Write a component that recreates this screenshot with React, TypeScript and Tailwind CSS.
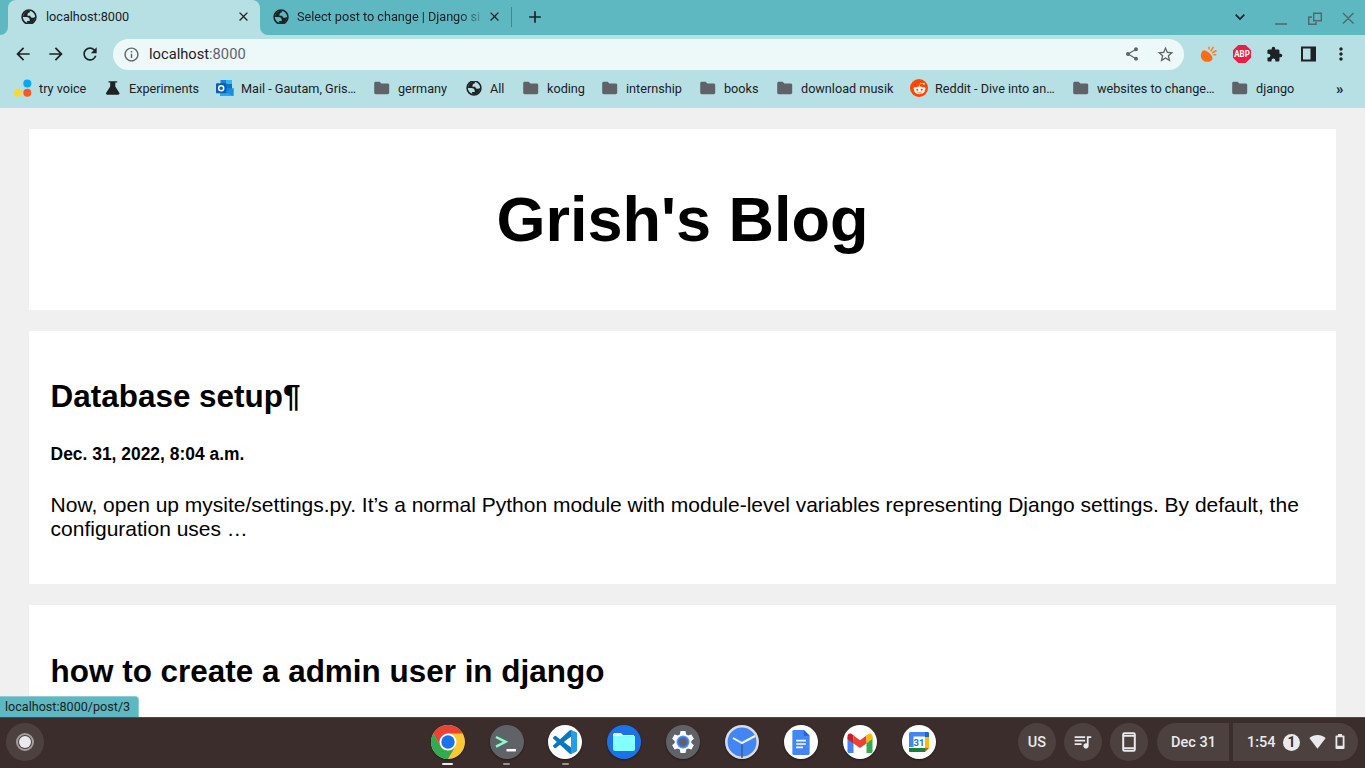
import React from "react";
import {
  MdShare, MdStarBorder, MdExtension, MdRefresh, MdArrowBack, MdArrowForward, MdInfoOutline,
  MdMoreVert, MdClose, MdAdd, MdQueueMusic,
} from "react-icons/md";
import { FaRedditAlien } from "react-icons/fa";

const Globe = () => (
  <svg viewBox="2 2 20 20" className="size-4 shrink-0 p-[.3px]" fill="#202124">
    <path fillRule="evenodd" d="M12 2a10 10 0 1 0 0 20 10 10 0 0 0 0-20zm0 2a8 8 0 1 1 0 16 8 8 0 0 1 0-16z" />
    <path d="M4 12h4.400c3.407.022 4.922 1.730 4.543 5.127H9.488v2.470a8.004 8.004 0 0 0 10.498-8.083C19.327 12.504 18.332 13 17 13c-2.137 0-3.206-.916-3.206-2.750h-3.748c-.274-2.728.683-4.092 2.870-4.092 0-.975.327-1.597.811-1.970A8.004 8.004 0 0 0 4 12z" />
  </svg>
);

const Folder = () => (
  <svg viewBox="0 0 16 16" className="size-4 shrink-0" fill="#5f6368">
    <path d="M1.700 1.800h4l1.600 1.600h6.400c.8 0 1.500.6 1.500 1.400v8c0 .8-.7 1.400-1.500 1.400H1.700c-.8 0-1.500-.6-1.500-1.400V3.200c0-.8.7-1.400 1.500-1.400z" />
  </svg>
);

const Voice = () => (
  <svg viewBox="0 0 18 18" className="-mx-px h-[18px] w-[18px] shrink-0">
    <circle cx="13.300" cy="4.400" r="4" fill="#03a9f4" />
    <circle cx="3.900" cy="13.700" r="3.900" fill="#fdd835" />
    <circle cx="13.300" cy="13.700" r="4" fill="#ff5722" />
  </svg>
);

const Flask = () => (
  <svg viewBox="0 0 16 16" className="size-4 shrink-0" fill="#202124">
    <path d="M3.500 1.200h8.700v1.300h-1.900v4l4 6.300c.6 1-.1 1.900-1.100 1.900H2.300c-1 0-1.700-.9-1.100-1.900l4-6.300v-4H3.500z" />
  </svg>
);

const Outlook = () => (
  <svg viewBox="0 0 18 18" className="-mx-px h-[18px] w-[18px] shrink-0">
    <path d="M4.500 1h11.500v11H4.500z" fill="#1683d8" />
    <path d="M10 1h6v4h-6z" fill="#35b8f1" />
    <path d="M10 5h6v4h-6z" fill="#1472bd" />
    <path d="M4 9.500 10.700 13 17.500 9v8H4z" fill="#28a8ea" />
    <path d="m9 13 8.500 4V9z" fill="#1490df" />
    <rect x="0" y="4.300" width="10.500" height="10" rx=".8" fill="#0a5eb5" />
    <circle cx="5.200" cy="9.300" r="2.500" fill="none" stroke="white" strokeWidth="1.500" />
  </svg>
);

const Reddit = () => (
  <span className="-mx-px flex h-[18px] w-[18px] shrink-0 items-center justify-center rounded-full bg-[#ff4500]">
    <FaRedditAlien className="size-[13px] text-white" />
  </span>
);

const bookmarks = [
  { label: "try voice", icon: <Voice />, w: "w-[90px]" },
  { label: "Experiments", icon: <Flask />, w: "w-[112px]" },
  { label: "Mail - Gautam, Gris…", icon: <Outlook />, w: "w-[157px]" },
  { label: "germany", icon: <Folder />, w: "w-[92px]" },
  { label: "All", icon: <Globe />, w: "w-[57px]" },
  { label: "koding", icon: <Folder />, w: "w-[79px]" },
  { label: "internship", icon: <Folder />, w: "w-[98px]" },
  { label: "books", icon: <Folder />, w: "w-[77px]" },
  { label: "download musik", icon: <Folder />, w: "w-[134px]" },
  { label: "Reddit - Dive into an…", icon: <Reddit />, w: "w-[162px]" },
  { label: "websites to change…", icon: <Folder />, w: "w-[159px]" },
  { label: "django", icon: <Folder />, w: "w-[104px]" },
];

function TabStrip() {
  return (
    <div className="flex h-[35px] bg-[#5db8c1] text-[12.700px] tracking-[-.02px]">
      <div className="w-2 bg-[#b7e0e4]"><div className="h-full rounded-br-lg bg-[#5db8c1]" /></div>
      <div className="flex w-[252px] items-center rounded-t-lg bg-[#b7e0e4] pr-[9px] pl-[13px] pb-[2px]">
        <Globe />
        <span className="ml-[9px] flex-1">localhost:8000</span>
        <MdClose className="size-[15px]" />
      </div>
      <div className="flex flex-1 bg-[#b7e0e4]">
        <div className="flex flex-1 items-center rounded-bl-lg bg-[#5db8c1] pb-[2px] pl-[13px]">
          <Globe />
          <span className="ml-2 w-[185px] whitespace-nowrap [mask-image:linear-gradient(to_right,black_162px,transparent_190px)]">
            Select post to change | Django si
          </span>
          <MdClose className="ml-[5px] size-[15px]" />
          <span className="ml-[9px] h-5 w-px bg-[#3e868d]" />
          <MdAdd className="ml-[13px] size-5" />
          <span className="flex-1" />
          <svg viewBox="0 0 12 8" className="mr-[26px] h-2 w-3" fill="none" stroke="#202124" strokeWidth="1.700"><path d="m1.700 1.700 4.300 4.300 4.300-4.300" /></svg>
          <svg viewBox="0 0 84 16" className="mt-[3px] mr-[9px] h-4 w-[84px]" fill="none" stroke="#54666b" strokeWidth="1.400">
            <path d="M3 14h12M41.700 3.200h7.600v7.600h-7.600zM40 7h-3.300v7.300H44V12M71 3l10.500 10.500M81.500 3 71 13.500" />
          </svg>
        </div>
      </div>
    </div>
  );
}

function Toolbar() {
  return (
    <div className="flex h-[38px] items-center bg-[#b7e0e4]">
      <MdArrowBack className="ml-[13px] size-5" />
      <MdArrowForward className="ml-[13px] size-5" />
      <MdRefresh className="ml-[14px] size-5" />
      <div className="ml-[13px] flex h-[31px] w-[1071px] items-center rounded-full bg-[#edf8f9] pl-[10px] text-[#5f6368]">
        <MdInfoOutline className="size-[17px]" />
        <span className="ml-[9px] flex-1 text-[14.700px]"><span className="text-[#202124]">localhost</span>:8000</span>
        <MdShare className="size-4" />
        <MdStarBorder className="mr-[9px] ml-4 size-[19px]" />
      </div>
      <svg viewBox="0 0 18 18" className="ml-4 size-[18px]">
        <path d="M2.700 5.800 12 14.900c-2.600 2.500-6.600 2.500-9.200.3-2.600-2.700-2.600-6.200-.1-9.400z" fill="#ff6d10" />
        <ellipse cx="7.500" cy="10.300" rx="6.400" ry="3" transform="rotate(44 7.500 10.300)" fill="#ff6d10" />
        <path d="M9 4.500V1.700M10.700 6.300l2.800-4.500M12.200 8l4.300-2.500M13.300 9.800h3" fill="none" stroke="#ff7c27" strokeWidth="1.500" />
      </svg>
      <svg viewBox="0 0 18 18" className="ml-[15px] size-[18px]">
        <path d="M5.300 0h7.400L18 5.300v7.400L12.700 18H5.300L0 12.700V5.300z" fill="#ed1e45" />
        <text x="9" y="12.300" textAnchor="middle" fontSize="9" textLength="15.500" lengthAdjust="spacingAndGlyphs" fontWeight="bold" fill="white">ABP</text>
      </svg>
      <MdExtension className="ml-[15px] size-[17px]" />
      <svg viewBox="0 0 16 16" className="ml-[18px] size-4"><path d="M0 .5h15v15H0zM2 2.500v11h7.500v-11z" fillRule="evenodd" fill="#202124" /></svg>
      <MdMoreVert className="ml-[14px] size-5" />
    </div>
  );
}

function Bookmarks() {
  return (
    <div className="flex h-[35px] items-center bg-[#b7e0e4] pb-[4px] pl-[15px] text-[12.700px] tracking-[-.02px]">
      {bookmarks.map((b) => (
        <div key={b.label} className={"flex shrink-0 items-center gap-2 whitespace-nowrap " + b.w}>
          {b.icon}
          <span>{b.label}</span>
        </div>
      ))}
      <span className="text-[15px] leading-4 font-bold">»</span>
    </div>
  );
}

function Post({ title, date, text }: { title: string; date?: string; text?: string }) {
  return (
    <article className={"mt-[21px] h-[253px] bg-white px-[21.600px] " + (date ? "pt-[47px]" : "pt-[48px]")}>
      <h2 className="text-[31.450px] leading-[37px] font-bold">{title}</h2>
      {date && <h5 className="mt-[29px] text-[17.430px] leading-5 font-bold">{date}</h5>}
      {text && <p className="mt-[29px] text-[21px] leading-6">{text}</p>}
    </article>
  );
}

const disc = "flex size-[34px] items-center justify-center rounded-full";

function Shelf() {
  const apps = [
    <svg viewBox="0 0 34 34" className="size-[34px]">
      <circle cx="17" cy="17" r="17" fill="#fcc934" />
      <path d="M2.300 8.500 9.600 21.200 17 17V8.500h14.700A17 17 0 0 0 2.300 8.500z" fill="#ea4335" />
      <path d="M2.300 8.500A17 17 0 0 0 17 34l7.400-12.800a8.500 8.500 0 0 1-14.800 0z" fill="#34a853" />
      <circle cx="17" cy="17" r="8.500" fill="white" /><circle cx="17" cy="17" r="6.700" fill="#1a73e8" />
    </svg>,
    <span className={disc + " bg-[#5f6368]"}>
      <svg viewBox="0 0 34 34" className="size-[34px]" fill="none" strokeWidth="2.500"><path d="m6 12 9.500 4.800L6 21.600" stroke="#87ffc5" /><path d="M16.500 25.200h9.500" stroke="white" /></svg>
    </span>,
    <span className={disc + " bg-white"}>
      <svg viewBox="0 0 24 24" className="size-6">
        <path d="M23.150 2.587 18.210.210a1.494 1.494 0 0 0-1.705.290l-9.460 8.630-4.120-3.128a.999.999 0 0 0-1.276.057L.327 7.261A1 1 0 0 0 .326 8.740L3.899 12 .326 15.260a1 1 0 0 0 .001 1.479L1.650 17.940a.999.999 0 0 0 1.276.057l4.120-3.128 9.460 8.630a1.492 1.492 0 0 0 1.704.290l4.942-2.377A1.500 1.500 0 0 0 24 20.060V3.939a1.500 1.500 0 0 0-.850-1.352zm-5.146 14.861L10.826 12l7.178-5.448v10.896z" fill="#0877bd" />
        <path d="m18 .1 5.150 2.487A1.500 1.500 0 0 1 24 3.939V20.060a1.500 1.500 0 0 1-.850 1.350L18 23.900z" fill="#269ee5" />
      </svg>
    </span>,
    <span className={disc + " bg-[#1a73e8]"}>
      <svg viewBox="0 0 22 18" className="h-[18px] w-[22px]"><path d="M1 0h7l2 2h11v4H0V1z" fill="#e8f0fe" /><path d="M0 3h22v13q0 2-2 2H2q-2 0-2-2z" fill="#84ffff" /></svg>
    </span>,
    <span className={disc + " bg-[#5f6368]"}>
      <svg viewBox="0 0 24 24" className="size-6">
        <path d="M9.500 1h5l.7 3.400 2 1.100 3.200-1.100 2.500 4.300-2.600 2.300v2l2.600 2.300-2.500 4.300-3.200-1.100-2 1.100-.7 3.400h-5l-.7-3.400-2-1.100-3.200 1.100-2.500-4.300L3.700 13v-2L1.100 8.700l2.500-4.300 3.200 1.100 2-1.100z" fill="white" />
        <circle cx="12" cy="12" r="6.500" fill="#5b95f4" /><circle cx="12" cy="12" r="5.300" fill="#3678df" /><circle cx="12" cy="12" r="3.700" fill="#5f6368" />
      </svg>
    </span>,
    <svg viewBox="0 0 34 34" className="size-[34px]" fill="none">
      <circle cx="17" cy="17" r="15.700" fill="#4285f4" stroke="#dadce0" strokeWidth="2.500" />
      <path d="M17 18v15" stroke="#3b5e92" strokeWidth="1.500" /><path d="m8 13 9 5 13-7" stroke="#f1f3f4" strokeWidth="2" />
    </svg>,
    <span className={disc + " bg-white"}>
      <svg viewBox="0 0 18 26" className="h-[25px] w-[18px]"><path d="M1.500 0H12l6 6v18.500q0 1.500-1.500 1.500h-15Q0 26 0 24.500v-23Q0 0 1.500 0z" fill="#4285f4" /><path d="M12 0v6h6z" fill="#1967d2" /><path d="M4 11h10M4 14.500h10M4 18h7" stroke="white" strokeWidth="1.700" /></svg>
    </span>,
    <span className={disc + " bg-white"}>
      <svg viewBox="0 0 26 20" className="mt-px h-5 w-[26px]">
        <path d="M.5 4v14.500q0 1.500 1.500 1.500h4.500V8z" fill="#4285f4" /><path d="M25.500 4v14.500q0 1.500-1.500 1.500h-4.500V8z" fill="#34a853" />
        <path d="M6.500 2.500 13 7.300l6.500-4.800v8L13 15l-6.500-4.500z" fill="#ea4335" />
        <path d="M.5 6V3.500C.5.500 3.500-1 6.500 2.500v8z" fill="#c5221f" /><path d="M25.500 6V3.500c0-3-3-4.500-6-1v8z" fill="#fbbc04" />
      </svg>
    </span>,
    <span className={disc + " bg-white"}>
      <svg viewBox="0 0 20 20" className="size-5">
        <path d="M1.500 0h17Q20 0 20 1.500V15H0V1.500Q0 0 1.500 0z" fill="#4285f4" /><path d="M16 5h4v11h-4z" fill="#fbbc04" /><path d="M16 0h2.500Q20 0 20 1.500V5h-4zM0 16h5v4H1.500Q0 20 0 18.500z" fill="#1967d2" />
        <path d="M0 16h16v4H1.500Q0 20 0 18.500z" fill="#188038" /><path d="M16 16h4l-4 4z" fill="#ea4335" /><path d="M4.500 4.500H16V16H4.500z" fill="white" />
        <text x="10" y="13.600" fontSize="9.500" fontWeight="bold" textAnchor="middle" fill="#1a73e8">31</text>
      </svg>
    </span>,
  ];
  const chip = "flex h-[38px] items-center bg-[#4d4140]";
  return (
    <footer className="flex h-[51px] items-start border-t border-[#544746] bg-[#3a2d2c] pl-[6px] text-[14.500px] font-medium text-[#e8eaed]">
      <div className={chip + " mt-[5px] w-[38px] justify-center rounded-full"}>
        <span className="flex size-[18px] items-center justify-center rounded-full border-2 border-[#a39d9c]"><span className="size-3 rounded-full bg-[#e8eaed]" /></span>
      </div>
      <div className="ml-[386.700px] flex w-[506px] gap-[24.900px] pt-px">
        {apps.map((a, i) => (
          <div key={i} className="flex h-[47px] w-[34px] shrink-0 flex-col items-center pt-[6px]">
            <div className="size-[34px] rounded-full shadow-[0_1px_2px_rgba(0,0,0,.45)]">{a}</div>
            {i < 3 && <span className={i === 0 ? "mt-1 h-[2px] w-[11px] shrink-0 rounded-full bg-[#e8eaed]" : "mt-1 h-[2px] w-[7px] shrink-0 rounded-full bg-[#989190]"} />}
          </div>
        ))}
      </div>
      <div className="mt-[5px] ml-[81.300px] flex">
        <div className={chip + " w-[38px] justify-center rounded-full pt-px"}>US</div>
        <div className={chip + " ml-2 w-[38px] justify-center rounded-full"}><MdQueueMusic className="mb-0.5 size-[21px]" /></div>
        <div className={chip + " ml-2 w-[38px] justify-center rounded-full"}>
          <svg viewBox="0 0 14 20" className="h-5 w-[14px]" fill="none" stroke="#e8eaed" strokeWidth="2"><rect x="1.200" y="1.200" width="11.600" height="17.600" rx="1.300" /><path d="M1 3.800h12M1 16.200h12" strokeWidth="1.700" /></svg>
        </div>
        <div className={chip + " ml-[9px] w-[72px] rounded-l-full rounded-r-[4px] pt-px pl-[14px] whitespace-nowrap"}>Dec 31</div>
        <div className={chip + " ml-1 w-[125px] rounded-l-[4px] rounded-r-full pl-[14px]"}>
          <span className="w-[28px] pt-px">1:54</span>
          <span className="ml-2 flex size-[17px] items-center justify-center rounded-full bg-[#e8eaed] text-[14px] font-bold text-[#3a2d2c]">1</span>
          <svg viewBox="0 0 17 14" className="ml-[9px] h-[14px] w-[17px]"><path d="M.3 3C5-1 12-1 16.700 3L8.500 13.700z" fill="#e8eaed" /></svg>
          <svg viewBox="0 0 10 16" className="ml-[9px] h-4 w-[10px]"><path d="M3 0h4v1.500h1.500q1 0 1 1V14q0 1-1 1h-7q-1 0-1-1V2.500q0-1 1-1H3zM2.300 3.300v8.500h5.400V3.300z" fillRule="evenodd" fill="#e8eaed" /></svg>
        </div>
      </div>
    </footer>
  );
}

export default function App() {
  return (
    <div className="flex h-[768px] w-[1365px] flex-col overflow-hidden font-['Roboto',sans-serif] text-[#202124]">
      <TabStrip />
      <Toolbar />
      <Bookmarks />
      <main className="relative h-[609px] overflow-hidden bg-[#f0f0f0] px-[29px] font-['Liberation_Sans',sans-serif] text-black">
        <header className="mt-[21px] flex h-[181px] items-center justify-center bg-white pb-px">
          <h1 className="text-[63px] leading-[72px] font-bold">Grish's Blog</h1>
        </header>
        <Post
          title="Database setup¶"
          date="Dec. 31, 2022, 8:04 a.m."
          text="Now, open up mysite/settings.py. It’s a normal Python module with module-level variables representing Django settings. By default, the configuration uses …"
        />
        <Post title="how to create a admin user in django" />
        <div className="absolute bottom-0 left-0 flex h-[21px] w-[139px] items-center rounded-tr-[4px] border-t border-r border-[#8fcdd3] bg-[#5db8c1] pl-[5px] font-['Roboto',sans-serif] text-[12.600px] text-[#202124]">
          localhost:8000/post/3
        </div>
      </main>
      <Shelf />
    </div>
  );
}
